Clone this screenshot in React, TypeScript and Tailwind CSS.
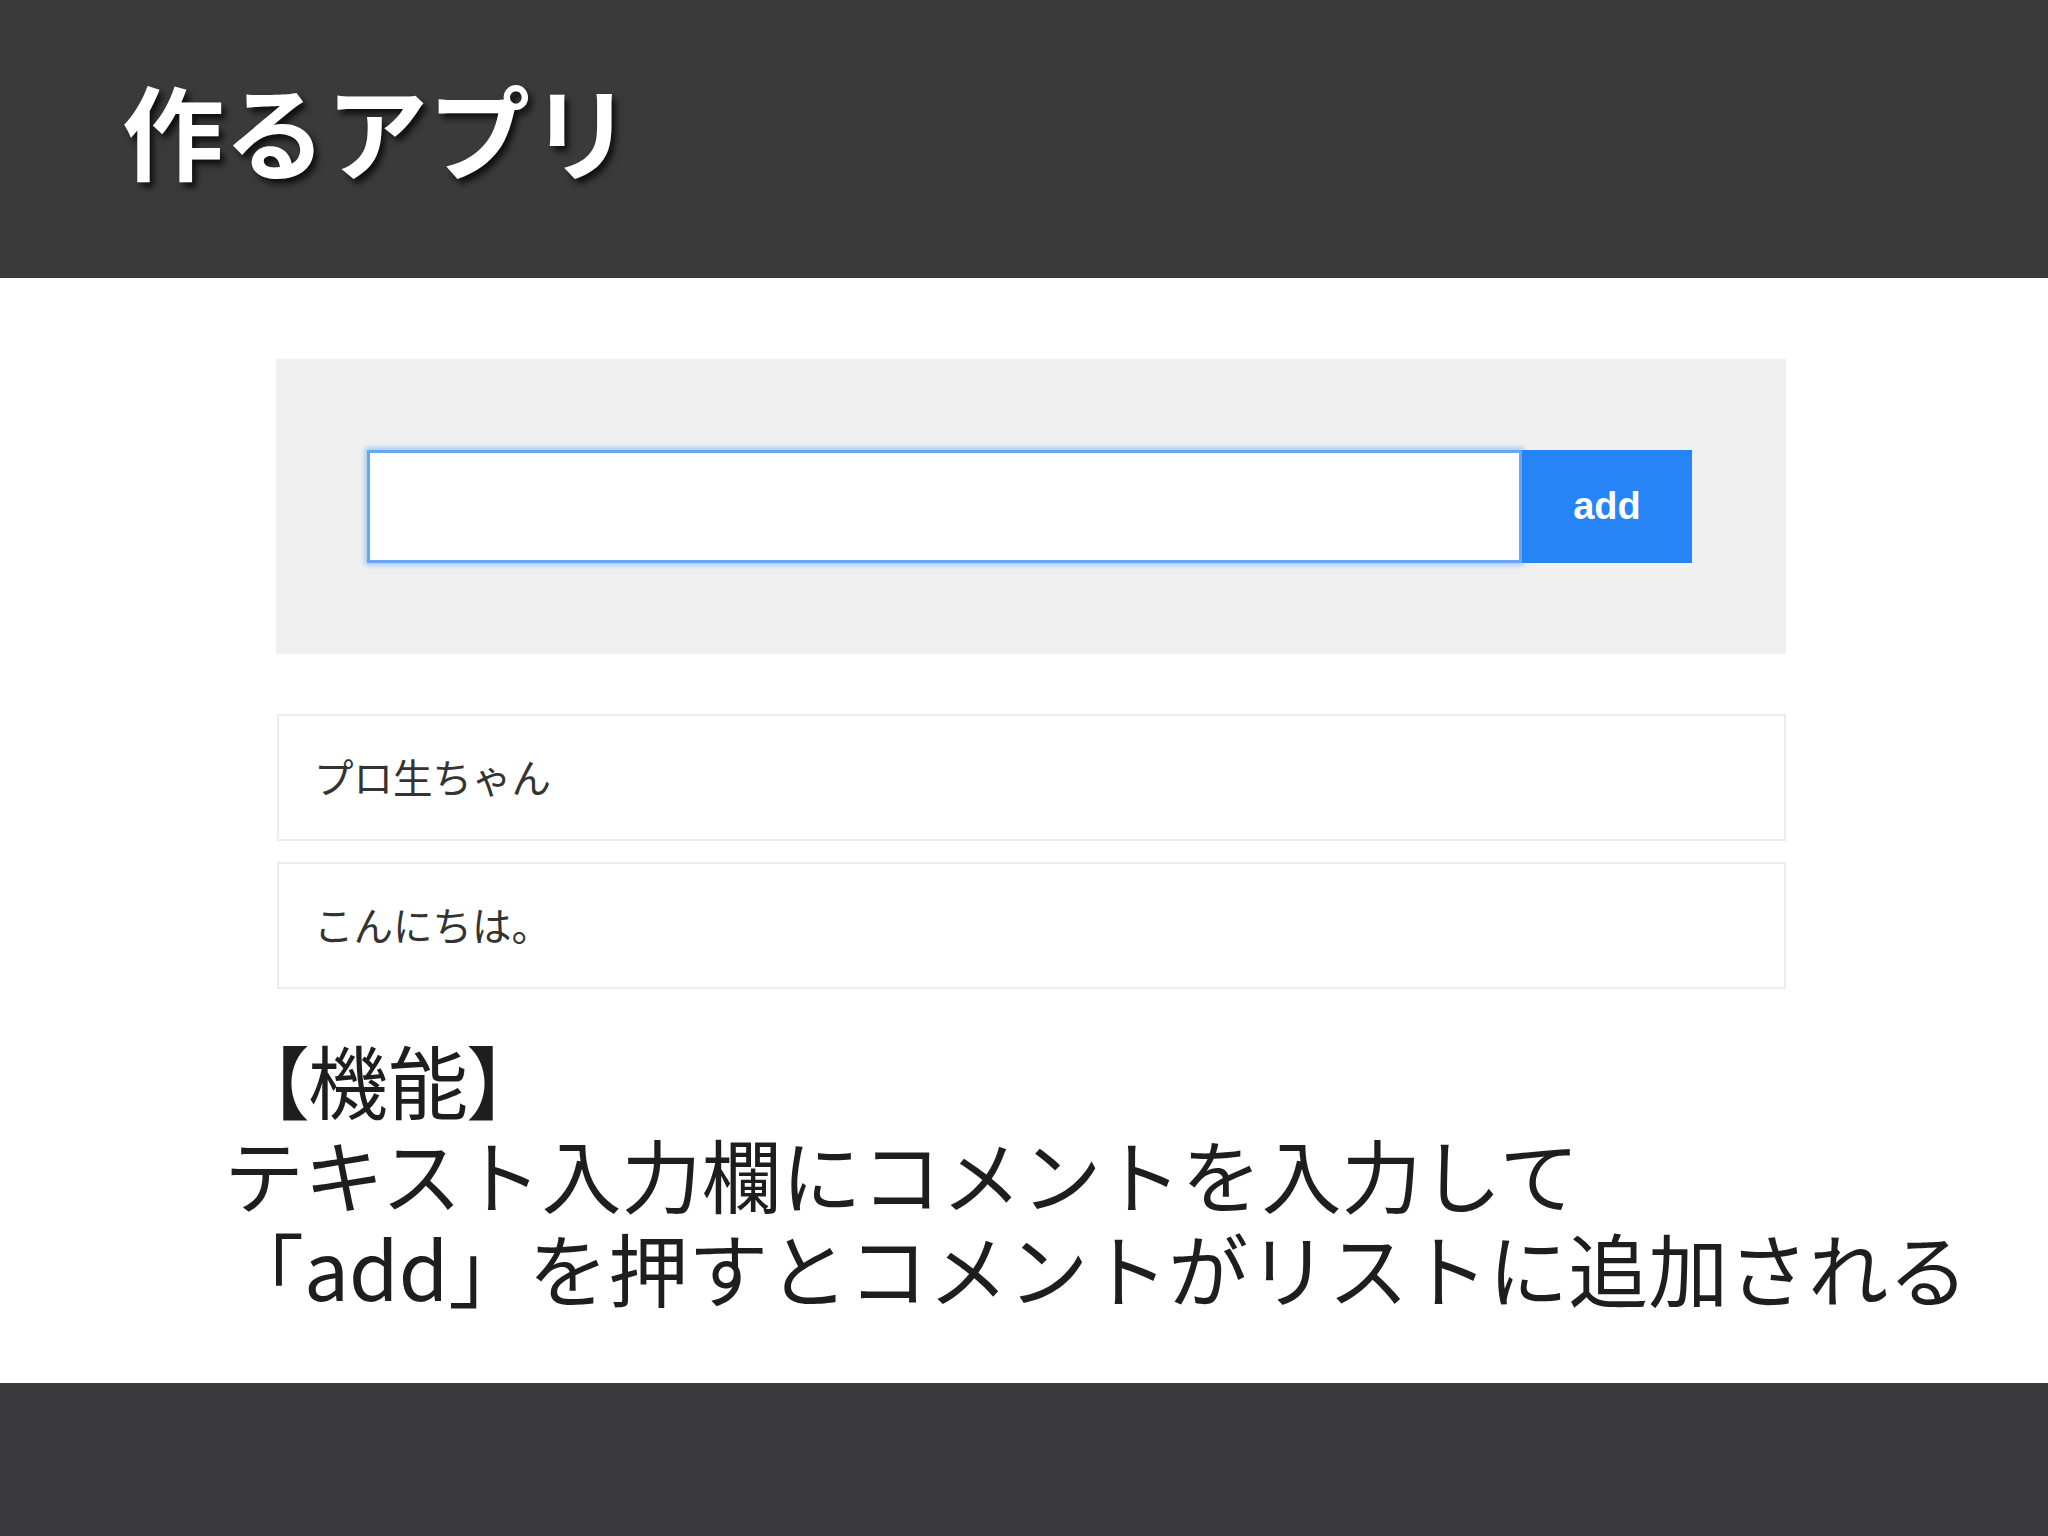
import React from "react";

export default function App() {
  const jp = "font-['Noto_Sans_CJK_JP','Noto_Sans',sans-serif]";
  return (
    <div className={`w-[2048px] h-[1536px] flex flex-col overflow-hidden bg-white ${jp}`}>
      <header className="h-[278px] shrink-0 bg-[#3a3a3a] flex items-center pl-[122px] pb-[20px]">
        <h1 className="text-[102px] leading-none font-bold text-white [text-shadow:4px_5px_6px_rgba(0,0,0,0.75)]">
          作るアプリ
        </h1>
      </header>

      <main className="flex-1 flex flex-col">
        <section className="ml-[276px] mt-[81px] w-[1510px] h-[295px] bg-[#f0f0f0] flex items-center pl-[91px]">
          <div className="flex items-center">
            <div className="w-[1155px] h-[113px] bg-white border-[3px] border-[#64a7f4] shadow-[0_0_5px_2px_rgba(90,160,245,0.55)]" />
            <button className="w-[170px] h-[113px] bg-[#2684f7] text-white text-[38px] font-bold font-['Liberation_Sans',Arial,sans-serif] flex items-center justify-center">
              add
            </button>
          </div>
        </section>

        <ul className="ml-[277px] mt-[60px] w-[1509px] flex flex-col gap-[21px]">
          <li className="h-[127px] border-2 border-[#ececec] flex items-center pl-[35px] pb-[4px] text-[39.5px] leading-none text-[#333333]">
            プロ生ちゃん
          </li>
          <li className="h-[127px] border-2 border-[#ececec] flex items-center pl-[35px] pb-[4px] text-[39.5px] leading-none text-[#333333]">
            こんにちは。
          </li>
        </ul>

        <div className="mt-[42px] pl-[224px] text-[80px] leading-[94px] text-[#1e1e1e]">
          <p className="pl-[44px] [font-feature-settings:'palt']">【機能】</p>
          <p>テキスト入力欄にコメントを入力して</p>
          <p>「add」を押すとコメントがリストに追加される</p>
        </div>
      </main>

      <footer className="h-[153px] shrink-0 bg-[#3a393b]" />
    </div>
  );
}
